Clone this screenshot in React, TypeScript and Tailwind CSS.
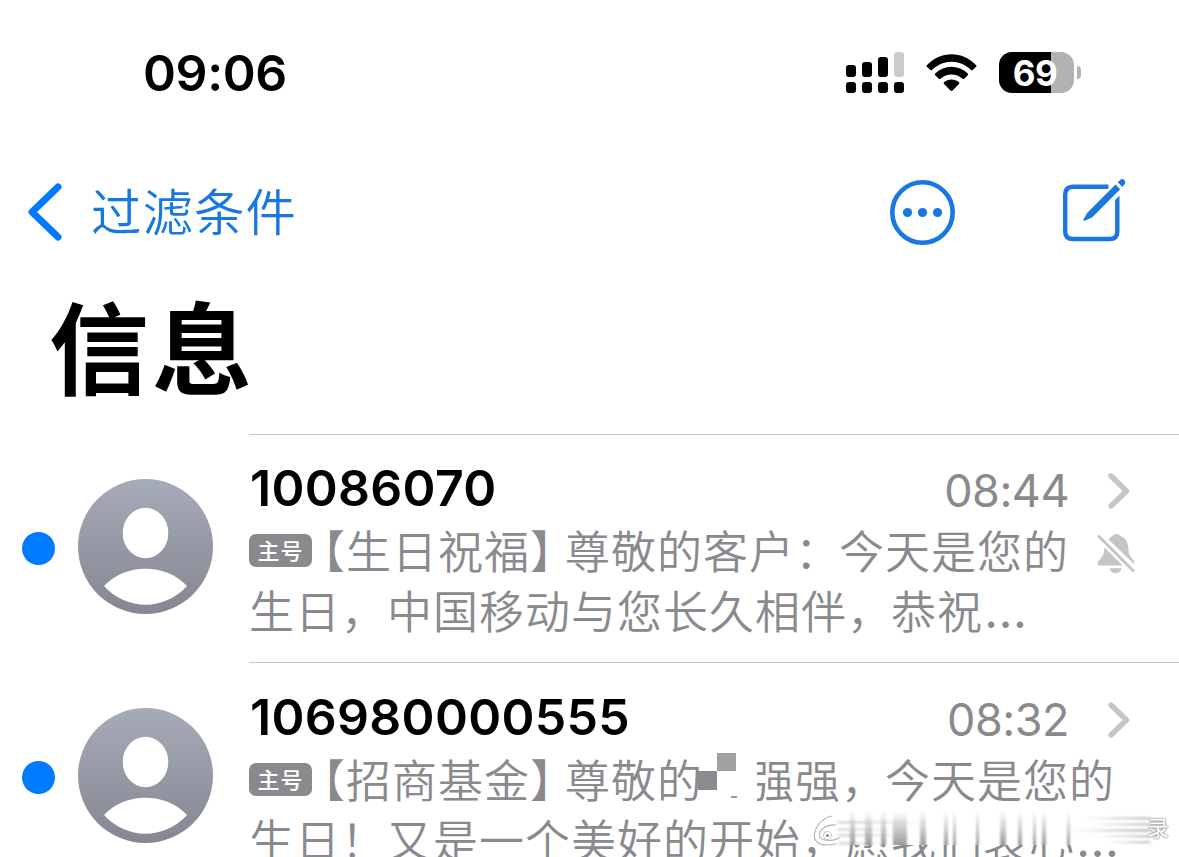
import React from 'react';

interface Message {
  id: number;
  sender: string;
  time: string;
  muted: boolean;
  content: React.ReactNode;
}

const SignalIcon = () => (
  <svg className="w-[58px] h-[41px]" viewBox="0 0 58 41">
    <rect x="0" y="13" width="10" height="12" rx="3" />
    <rect x="16" y="10" width="10" height="15" rx="3" />
    <rect x="32" y="5" width="10" height="20" rx="3" />
    <rect x="48" y="0" width="10" height="25" rx="3" fill="#cbcbcb" />
    <rect x="0" y="30" width="10" height="11" rx="3" />
    <rect x="16" y="30" width="10" height="11" rx="3" />
    <rect x="32" y="30" width="10" height="11" rx="3" />
    <rect x="48" y="30" width="10" height="11" rx="3" />
  </svg>
);

const WifiIcon = () => (
  <svg className="w-[51px] h-[38px]" viewBox="0 0 51 38">
    <path d="M0.8 11.2 C14.5 -3.5 36.5 -3.5 50.2 11.2 Q50.8 12 50.2 12.7 L46.6 16.1 Q45.8 16.8 45 16.1 C34 5.1 17 5.1 6 16.1 Q5.2 16.8 4.4 16.1 L0.8 12.7 Q0.2 12 0.8 11.2Z" />
    <path d="M9.2 19.6 C18.5 10.5 32.5 10.5 41.8 19.6 Q42.5 20.4 41.8 21.2 L38.2 24.7 Q37.4 25.4 36.6 24.7 C30 19 21 19 14.4 24.7 Q13.6 25.4 12.8 24.7 L9.2 21.2 Q8.5 20.4 9.2 19.6Z" />
    <path d="M18 28.2 C22.4 24.7 28.6 24.7 33 28.2 Q33.8 29 33 29.9 L26.3 36.7 Q25.5 37.4 24.7 36.7 L18 29.9 Q17.2 29 18 28.2Z" />
  </svg>
);

const Avatar = () => (
  <svg className="w-[135px] h-[135px] shrink-0" viewBox="0 0 135 135">
    <defs>
      <linearGradient id="avatar" x1="0" y1="0" x2="0" y2="1">
        <stop offset="0" stopColor="#a6abb9" />
        <stop offset="1" stopColor="#858791" />
      </linearGradient>
    </defs>
    <circle cx="67.5" cy="67.5" r="67.5" fill="url(#avatar)" />
    <ellipse cx="67.5" cy="54" rx="22.8" ry="25.2" fill="#fff" />
    <path d="M26 107 C47 84 88 84 109 107 C86 132 49 132 26 107Z" fill="#fff" />
  </svg>
);

const ChevronRight = () => (
  <svg className="w-[22px] h-[36px]" viewBox="0 0 22 36" fill="none" stroke="#c5c5c7" strokeWidth="5.4" strokeLinecap="round" strokeLinejoin="round">
    <path d="M3 3 L18.5 18 L3 33" />
  </svg>
);

const BellOff = () => (
  <svg className="w-[38px] h-[41px]" viewBox="0 0 38 41">
    <path fill="#c5c5c7" d="M11.5 6.5 C13.5 3.8 15 3.2 16 2.6 C17.8 0.6 21 0.6 22.7 2.6 C28.5 4.7 31 9 31.3 15 C31.5 20.5 32.3 22.6 35.2 25.4 C36.8 27.2 37.5 28.7 37 31 Z" />
    <path fill="#c5c5c7" d="M7.4 14.2 L25.8 32.6 H3 C0.6 32.6 -0.2 30 1.6 27.9 C5.6 23.5 7.2 22.5 7.4 14.2Z" />
    <path fill="#c5c5c7" d="M12.6 35.2 H24.6 C23.4 42 13.8 42 12.6 35.2Z" />
    <path d="M2 3.5 L36 37.5" stroke="#c5c5c7" strokeWidth="3" strokeLinecap="round" />
  </svg>
);

const SimBadge = () => (
  <span className="w-[63px] h-[33px] shrink-0 rounded-[7px] bg-[#8a8a8e] text-white text-[22px] leading-[31px] font-medium text-center">主号</span>
);

const Ellipsis = () => <span className="ml-px font-['Inter'] font-normal text-[50px] tracking-normal">…</span>;

// Smeared strip with the logo and the last character of the watermark
const Watermark = () => (
  <div className="absolute left-[812px] top-[808px] w-[367px] h-[49px]">
    <svg className="w-full h-full" viewBox="0 0 367 49">
      <defs>
        <linearGradient id="bar" x1="0" y1="0" x2="0" y2="1">
          <stop offset="0" stopColor="#8a8a8e" stopOpacity="0" />
          <stop offset="0.5" stopColor="#8a8a8e" stopOpacity="0.4" />
          <stop offset="1" stopColor="#8a8a8e" stopOpacity="0.85" />
        </linearGradient>
        <linearGradient id="fadeIn" x1="0" y1="0" x2="1" y2="0">
          <stop offset="0" stopColor="#aaa" stopOpacity="0.45" />
          <stop offset="1" stopColor="#aaa" stopOpacity="0" />
        </linearGradient>
        <linearGradient id="fadeOut" x1="1" y1="0" x2="0" y2="0">
          <stop offset="0" stopColor="#999" stopOpacity="0.6" />
          <stop offset="1" stopColor="#999" stopOpacity="0" />
        </linearGradient>
        <filter id="soft" x="-5%" y="-5%" width="110%" height="110%">
          <feGaussianBlur stdDeviation="1 0.4" />
        </filter>
        <filter id="smear" x="-10%" y="-30%" width="120%" height="160%">
          <feGaussianBlur stdDeviation="2 1.1" />
        </filter>
      </defs>
      <rect x="32" y="0" width="302" height="37" fill="#fff" />
      <g fill="url(#bar)" filter="url(#soft)">
        <rect x="38" y="3" width="5" height="34" />
        <rect x="53" y="3" width="7" height="34" />
        <rect x="69" y="3" width="5" height="34" />
        <rect x="81" y="3" width="14" height="34" />
        <rect x="108" y="3" width="6" height="34" />
        <rect x="132" y="3" width="4" height="34" />
        <rect x="141" y="3" width="3" height="34" />
        <rect x="164" y="3" width="3" height="34" />
        <rect x="188" y="3" width="6" height="34" />
        <rect x="206" y="3" width="4" height="34" />
        <rect x="221" y="3" width="3" height="34" />
        <rect x="230" y="3" width="4" height="34" />
        <rect x="255" y="3" width="3" height="34" />
      </g>
      <g fill="url(#fadeIn)" filter="url(#smear)">
        <rect x="26" y="13" width="90" height="3" />
        <rect x="26" y="20" width="60" height="3" />
        <rect x="26" y="26" width="80" height="3" />
        <rect x="26" y="34" width="50" height="3" />
      </g>
      <g fill="url(#fadeOut)" filter="url(#smear)">
        <rect x="270" y="9" width="68" height="2.500" />
        <rect x="280" y="15" width="58" height="2.500" />
        <rect x="260" y="21" width="78" height="3" />
        <rect x="285" y="27" width="53" height="2.500" />
        <rect x="295" y="33" width="43" height="2.500" />
      </g>
      <g fill="none" stroke="#b4b4b6" strokeWidth="1.1" strokeLinecap="round">
        <path d="M20 8 C9 10 0 22 3 31 C5 37 14 38 24 36" />
        <path d="M24 17 C14 16 7 22 7.500 27.500 C8 33 20 34 27 30" />
        <circle cx="15.500" cy="27.500" r="4" strokeWidth="0.8" />
      </g>
      <circle cx="15.500" cy="27.500" r="1.600" fill="#8a8a8e" />
    </svg>
    <span className="absolute left-[335px] top-[1px] text-[22px] leading-[34px] text-white [text-shadow:0_0_2px_#777,0_0_2px_#888]">录</span>
  </div>
);

const messages: Message[] = [
  {
    id: 1,
    sender: '10086070',
    time: '08:44',
    muted: true,
    content: (
      <>
        <div className="flex items-center h-[60px]">
          <SimBadge />
          <span className="-ml-[12px] w-[265px]">【生日祝福】</span>
          <span className="w-[274px]">尊敬的客户：</span>
          <span>今天是您的</span>
        </div>
        <div className="flex items-center h-[60px]">
          <span className="w-[642px]">生日，中国移动与您长久相伴，</span>
          <span>恭祝</span>
          <Ellipsis />
        </div>
      </>
    ),
  },
  {
    id: 2,
    sender: '106980000555',
    time: '08:32',
    muted: false,
    content: (
      <>
        <div className="flex items-center h-[60px]">
          <SimBadge />
          <span className="-ml-[12px] w-[265px]">【招商基金】</span>
          <span className="w-[138px]">尊敬的</span>
          {/* censored name */}
          <span className="relative w-[52px] h-[46px] shrink-0">
            <span className="absolute left-[14px] -top-[3px] z-10 w-[19px] h-[18px] bg-[#a0a0a3]" />
            <span className="absolute -left-[5px] top-[15px] z-10 w-[19px] h-[19px] bg-[#8b8b8f]" />
            <span className="absolute left-[28px] top-[40px] w-[6px] h-[2px] bg-[#98989b]" />
            <span className="absolute left-[37px] top-0 z-10 w-[17px] h-[46px] bg-white" />
          </span>
          <span className="w-[136px] -ml-[6px]">强强，</span>
          <span>今天是您的</span>
        </div>
        <div className="flex items-center h-[60px]">
          <span className="w-[596px]">生日！又是一个美好的开始，</span>
          <span>愿我们衷心</span>
          <Ellipsis />
        </div>
      </>
    ),
  },
];

const MessageRow: React.FC<{ message: Message }> = ({ message }) => (
  <div className="group flex h-[228px] last:h-[230px] shrink-0">
    <div className="w-[249px] pl-[22px] pt-px flex items-center shrink-0">
      <div className="w-[33px] h-[33px] mr-[23px] rounded-full bg-[#007aff] shrink-0" />
      <div className="-mt-[4px]">
        <Avatar />
      </div>
    </div>
    <div className="flex-1 h-full border-t border-[#c4c4c6] relative pt-[23px] group-last:pt-[24px] whitespace-nowrap">
      <div className="flex items-center h-[62px] pr-[49px]">
        <span className="-mt-[2px] ml-px font-['Inter'] font-semibold text-[50px] tracking-[0.3px] text-black">{message.sender}</span>
        <span className="ml-auto mt-[3px] mr-[39px] font-['Inter'] text-[45px] tracking-[-0.5px] text-[#8a8a8e]">{message.time}</span>
        <div className="mt-[4px]">
          <ChevronRight />
        </div>
      </div>
      <div className="text-[45px] leading-[60px] font-[350] tracking-[1px] text-[#8a8a8e]">{message.content}</div>
      {message.muted && (
        <div className="absolute left-[848px] top-[98px]">
          <BellOff />
        </div>
      )}
    </div>
  </div>
);

const App: React.FC = () => {
  return (
    <div className="relative w-[1179px] h-[857px] overflow-hidden bg-white font-['Noto_Sans_CJK_SC',sans-serif] flex flex-col">
      <header className="h-[145px] shrink-0 flex items-center pl-[143px] pr-[98px]">
        <span className="mt-px font-['Inter'] font-semibold text-[50px] leading-[60px] tracking-[-0.4px]">09:06</span>
        <div className="ml-auto flex items-center">
          <SignalIcon />
          <div className="ml-[22px]">
            <WifiIcon />
          </div>
          <div className="ml-[22px] flex items-center">
            <div className="w-[75px] h-[41px] pr-[3px] rounded-[13px] bg-[linear-gradient(to_right,#000_52px,#b2b2b2_52px)] text-white font-['Inter'] font-bold text-[35px] leading-[42px] tracking-[-0.5px] text-center">69</div>
            <div className="ml-[3px] w-[4px] h-[13px] rounded-r-full bg-[#b2b2b2]" />
          </div>
        </div>
      </header>

      <nav className="h-[134px] shrink-0 flex items-center pl-[27px] pr-[52px] text-[#1878e0]">
        <svg className="w-[36px] h-[58px]" viewBox="0 0 36 58" fill="none" stroke="#007aff" strokeWidth="7" strokeLinecap="round" strokeLinejoin="round">
          <path d="M31 4 L5 29 L31 54" />
        </svg>
        <span className="ml-[28px] -mt-[6px] text-[50.5px] leading-[60px] font-[350] tracking-[1px]">过滤条件</span>
        <svg className="ml-auto w-[66px] h-[66px]" viewBox="0 0 66 66">
          <circle cx="33.500" cy="33.500" r="30.200" fill="none" stroke="currentColor" strokeWidth="4.600" />
          <circle cx="18.500" cy="33.500" r="4.600" fill="currentColor" />
          <circle cx="33.500" cy="33.500" r="4.600" fill="currentColor" />
          <circle cx="48.500" cy="33.500" r="4.600" fill="currentColor" />
        </svg>
        <svg className="ml-[106px] w-[66px] h-[66px] -mt-[3px]" viewBox="0 0 66 66">
          <path d="M47.500 8.800 H12 Q4.200 8.800 4.200 16.600 V53.200 Q4.200 61 12 61 H48.500 Q56.300 61 56.300 53.200 V18" fill="none" stroke="currentColor" strokeWidth="4.400" />
          <path d="M60 7 L25 42" stroke="#fff" strokeWidth="13" />
          <path d="M54.500 6.500 L59.200 11.200 L31 39.500 L23.600 42.700 Q22 43 22.600 41.300 L26.300 34.800Z" fill="currentColor" />
          <path d="M56.800 4.300 L59.400 1.700 Q61.500 0.200 63.300 2 Q65.200 4 63.800 6 L61.400 8.900Z" fill="currentColor" />
        </svg>
      </nav>

      <h1 className="h-[155px] shrink-0 pl-[49px] text-[100px] leading-[130px] font-bold text-black tracking-[3px]">信息</h1>

      <main className="flex-1 min-h-0">
        {messages.map(message => (
          <MessageRow key={message.id} message={message} />
        ))}
      </main>

      <Watermark />
    </div>
  );
};

export default App;
